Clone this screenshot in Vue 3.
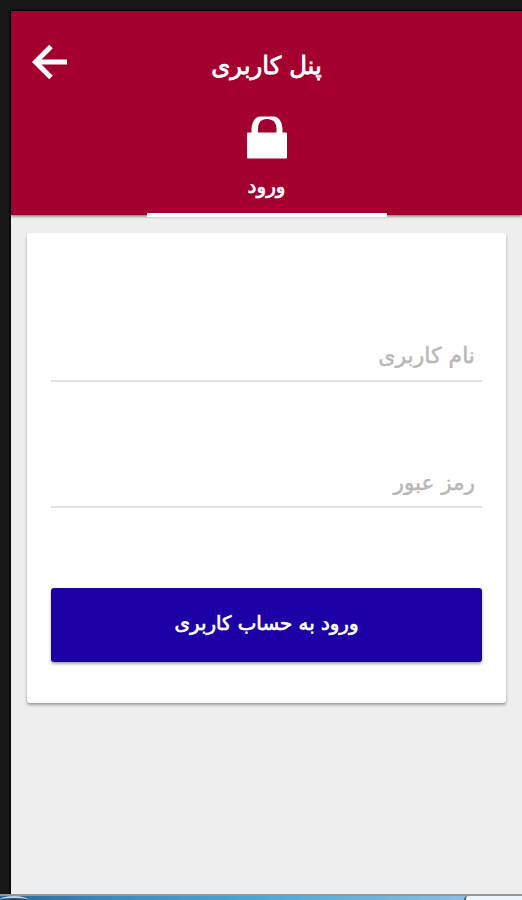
<script setup>
import { ref } from 'vue'

const username = ref('')
const password = ref('')
</script>

<template>
    <div class="screen" dir="rtl">
        <div class="phone">
            <header>
                <div class="toolbar">
                    <span class="space"></span>
                    <h1>پنل کاربری</h1>
                    <button class="back" aria-label="بازگشت">
                        <svg width="36" height="36" viewBox="0 0 36 36">
                            <path d="M36 18H5M20 2.500L4.500 18L20 33.500" fill="none" stroke="#fff" stroke-width="5" />
                        </svg>
                    </button>
                </div>
                <div class="tab">
                    <svg width="40" height="43" viewBox="0 0 40 43">
                        <path d="M4.500 17V13C4.500 7 8 .8 12.500 .5H27.500C32 .8 35.500 7 35.500 13V17H29.500V13C29.500 6.500 26 3 20 3S11 6.500 11 13V17Z" fill="#fff" />
                        <rect y="16.500" width="40" height="26" rx="1" fill="#fff" />
                    </svg>
                    <span>ورود</span>
                </div>
            </header>
            <form class="card" @submit.prevent>
                <input v-model="username" class="user" type="text" placeholder="نام کاربری">
                <input v-model="password" class="pass" type="password" placeholder="رمز عبور">
                <button class="login">ورود به حساب کاربری</button>
            </form>
        </div>
        <div class="taskbar">
            <div class="orb"></div>
            <div class="window"></div>
        </div>
    </div>
</template>

<style>
body {
    margin: 0;
    overflow: hidden;
}
</style>

<style scoped>
* {
    box-sizing: border-box;
}

.screen {
    width: 522px;
    height: 900px;
    display: flex;
    flex-direction: column;
    background: #181818;
    padding-top: 11px;
    overflow: hidden;
    font-family: "DejaVu Sans", sans-serif;
}

.phone {
    height: 883px;
    margin-left: 11px;
    background: #eee;
    box-shadow: 0 0 2px 1px #000;
}

header {
    height: 204px;
    background: #a4002f;
    color: #fff;
    box-shadow: 0 1px 3px rgba(0, 0, 0, .6);
}

.toolbar {
    height: 102px;
    padding: 0 20px;
    display: flex;
    align-items: center;
    justify-content: space-between;
}

.space {
    width: 36px;
}

h1 {
    margin: 8px 0 0;
    font-size: 24.4px;
    font-weight: normal;
    line-height: 30px;
    -webkit-text-stroke: .8px #fff;
}

button {
    border: 0;
    padding: 0;
    font-family: inherit;
    color: #fff;
}

.back {
    width: 36px;
    height: 36px;
    background: none;
}

.tab {
    width: 240px;
    height: 104px;
    margin: 0 auto;
    padding-top: 3px;
    display: flex;
    flex-direction: column;
    align-items: center;
    border-bottom: 4px solid #fff;
    font-size: 20px;
    -webkit-text-stroke: .7px #fff;
}

.tab span {
    margin-top: 13px;
    line-height: 28px;
}

.card {
    width: 479px;
    height: 470px;
    margin: 18px 16px 0 0;
    padding: 98px 24px 0;
    display: flex;
    flex-direction: column;
    background: #fff;
    border-radius: 3px;
    box-shadow: 0 2px 3px rgba(0, 0, 0, .35);
}

input {
    width: 431px;
    height: 51px;
    padding: 0 7px;
    border: 0;
    border-bottom: 2px solid #e2e2e2;
    outline: none;
    background: none;
    font-family: inherit;
    font-size: 22px;
}

input::placeholder {
    color: #b8b8b8;
    opacity: 1;
    -webkit-text-stroke: .5px #b8b8b8;
}

.pass {
    margin-top: 75px;
    padding-top: 2px;
    font-size: 21.5px;
}

.login {
    width: 431px;
    height: 74px;
    margin-top: 80px;
    padding-bottom: 4px;
    border-radius: 3px;
    background: #1c00a5;
    box-shadow: 0 2px 3px rgba(0, 0, 0, .35);
    font-size: 19.8px;
    -webkit-text-stroke: .7px #fff;
}

.taskbar {
    height: 6px;
    display: flex;
    direction: ltr;
    justify-content: space-between;
    border-top: 2px solid #91979b;
    background: linear-gradient(90deg, #28699b, #3a8ab9 20%, #48a9d6 50%, #8abfe4 90%);
}

.orb {
    width: 28px;
    height: 8px;
    border-top: 2px solid #c4d5df;
    border-radius: 50%;
    background: #244e70;
}

.window {
    width: 58px;
    background: #edf5fb;
    border-left: 2px solid #44677d;
    border-radius: 4px 0 0;
}
</style>
